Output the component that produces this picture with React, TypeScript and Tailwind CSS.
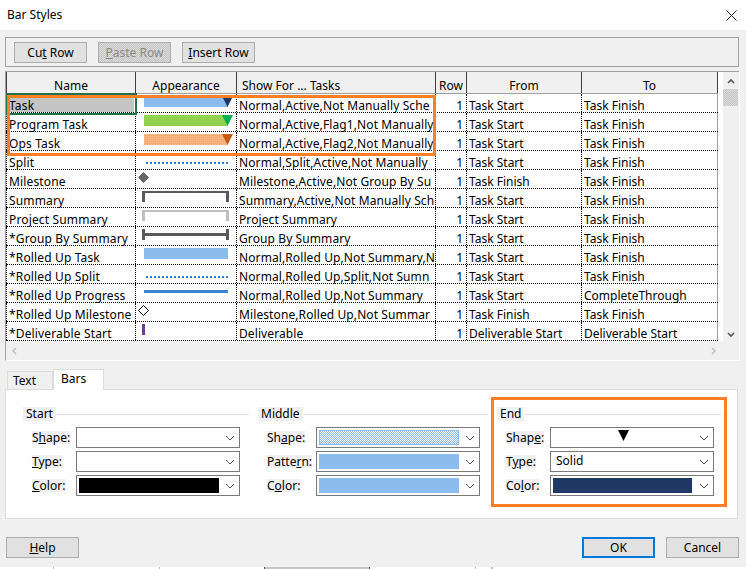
import type { ReactNode } from "react";

const font = "font-['Noto_Sans',sans-serif]";

const rows: [string, string, string, string, ReactNode][] = [
  ["Task", "Normal,Active,Not Manually Sche", "Task Start", "Task Finish", <TaskBar fill="#8cbbee" tip="#1f3864" />],
  ["Program Task", "Normal,Active,Flag1,Not Manually", "Task Start", "Task Finish", <TaskBar fill="#92d050" tip="#00b050" />],
  ["Ops Task", "Normal,Active,Flag2,Not Manually", "Task Start", "Task Finish", <TaskBar fill="url(#ops)" tip="#c55a11" />],
  ["Split", "Normal,Split,Active,Not Manually", "Task Start", "Task Finish", <DotLine />],
  ["Milestone", "Milestone,Active,Not Group By Su", "Task Finish", "Task Finish", <Diamond fill="#666666" stroke="#666666" />],
  ["Summary", "Summary,Active,Not Manually Sch", "Task Start", "Task Finish", <Bracket color="#595959" />],
  ["Project Summary", "Project Summary", "Task Start", "Task Finish", <Bracket color="#bfbfbf" />],
  ["*Group By Summary", "Group By Summary", "Task Start", "Task Finish", <GroupBar />],
  ["*Rolled Up Task", "Normal,Rolled Up,Not Summary,N", "Task Start", "Task Finish", <TaskBar fill="#8cbbee" />],
  ["*Rolled Up Split", "Normal,Rolled Up,Split,Not Sumn", "Task Start", "Task Finish", <DotLine />],
  ["*Rolled Up Progress", "Normal,Rolled Up,Not Summary", "Task Start", "CompleteThrough", <ProgressLine />],
  ["*Rolled Up Milestone", "Milestone,Rolled Up,Not Summar", "Task Finish", "Task Finish", <Diamond fill="#ffffff" stroke="#000000" />],
  ["*Deliverable Start", "Deliverable", "Deliverable Start", "Deliverable Start", <Tick />],
];

function Cell({ className, children }: { className: string; children: ReactNode }) {
  return <div className={`${className} shrink-0 whitespace-nowrap pl-[2px] pt-[6px] leading-[12px]`}>{children}</div>;
}

function Head({ className, children }: { className: string; children: ReactNode }) {
  return <div className={`${className} shrink-0 overflow-hidden whitespace-nowrap border-r border-[#404040] pt-[6px] leading-[16px]`}>{children}</div>;
}

function Art({ children }: { children: ReactNode }) {
  return (
    <svg width="100" height="18" viewBox="0 0 100 18" className="block" shapeRendering="crispEdges">
      <defs>
        <pattern id="ops" width="2" height="2" patternUnits="userSpaceOnUse">
          <rect width="2" height="2" fill="#f6ae74" />
          <rect width="1" height="1" fill="#f4bb90" />
        </pattern>
      </defs>
      {children}
    </svg>
  );
}

function TaskBar({ fill, tip }: { fill: string; tip?: string }) {
  return (
    <Art>
      <rect x="8" y="2" width="84" height="11" fill={fill} />
      {tip && <polygon points="86,2 97,2 91.5,13" fill={tip} shapeRendering="auto" />}
    </Art>
  );
}

function DotLine() {
  return (
    <Art>
      <line x1="10" y1="11.5" x2="92" y2="11.5" stroke="#2e86d6" strokeWidth="2" strokeDasharray="2 2" />
    </Art>
  );
}

function Diamond({ fill, stroke }: { fill: string; stroke: string }) {
  return (
    <Art>
      <polygon points="7.5,2.5 12.5,7.5 7.5,12.5 2.5,7.5" fill={fill} stroke={stroke} shapeRendering="auto" />
    </Art>
  );
}

function Bracket({ color }: { color: string }) {
  return (
    <Art>
      <rect x="6" y="2" width="87" height="2" fill={color} />
      <rect x="6" y="2" width="3" height="11" fill={color} />
      <rect x="90" y="2" width="3" height="11" fill={color} />
    </Art>
  );
}

function GroupBar() {
  return (
    <Art>
      <rect x="6" y="2" width="3" height="11" fill="#595959" />
      <rect x="90" y="2" width="3" height="11" fill="#595959" />
      <rect x="6" y="6" width="87" height="3" fill="#595959" />
    </Art>
  );
}

function ProgressLine() {
  return (
    <Art>
      <rect x="8" y="6" width="84" height="3" fill="#3d85d0" />
    </Art>
  );
}

function Tick() {
  return (
    <Art>
      <rect x="6" y="2" width="3" height="11" fill="#6f3d98" />
    </Art>
  );
}

function Chevron() {
  return (
    <svg width="10" height="6" viewBox="0 0 10 6" className="shrink-0">
      <path d="M1 1L5 5L9 1" fill="none" stroke="#555555" />
    </svg>
  );
}

function Btn({ children, className = "border border-[#adadad]" }: { children: ReactNode; className?: string }) {
  return (
    <div className={`flex h-[21px] w-[73px] items-center justify-center bg-[#e1e1e1] pt-px text-[12px] leading-[16px] ${className}`}>
      <span>{children}</span>
    </div>
  );
}

function Combo({ children }: { children?: ReactNode }) {
  return (
    <div className="flex h-[21px] w-[164px] items-center border border-[#7a7a7a] bg-white pr-[4px] text-[12px]">
      <div className="flex h-full min-w-0 flex-1 items-stretch p-[2px]">{children}</div>
      <Chevron />
    </div>
  );
}

function Field({ label, labelW, children }: { label: ReactNode; labelW: string; children?: ReactNode }) {
  return (
    <div className="flex items-center">
      <div className={`${labelW} shrink-0 pl-[9px] text-[12px]`}>
        <span className="inline-block bg-[#f0f0f0] leading-[13px]">{label}</span>
      </div>
      <Combo>{children}</Combo>
    </div>
  );
}

function Group({ title, width, children }: { title: string; width: string; children: ReactNode }) {
  return (
    <div className={`${width} shrink-0`}>
      <div className="flex h-[14px] items-center text-[12px]">
        <span className="bg-[#f0f0f0] px-[3px] leading-[14px]">{title}</span>
        <span className="ml-px h-px flex-1 bg-[#dcdcdc]" />
      </div>
      <div className="mt-[6px] flex flex-col gap-[3px]">{children}</div>
    </div>
  );
}

function DitherSwatch() {
  return (
    <svg width="140" height="15" className="block" shapeRendering="crispEdges">
      <defs>
        <pattern id="dither" width="2" height="2" patternUnits="userSpaceOnUse">
          <rect width="2" height="2" fill="#ffffff" />
          <rect width="1" height="1" fill="#8cbbee" />
          <rect x="1" y="1" width="1" height="1" fill="#8cbbee" />
        </pattern>
      </defs>
      <rect width="140" height="15" fill="url(#dither)" />
      <rect x="0.5" y="0.5" width="139" height="14" fill="none" stroke="#8cbbee" />
    </svg>
  );
}

export default function App() {
  return (
    <div className={`${font} relative h-[569px] w-[748px] overflow-hidden bg-white text-[12px] text-black`}>
      {/* title bar */}
      <div className="flex h-[30px] items-center justify-between pl-[7px] pr-[11px]">
        <span>Bar Styles</span>
        <svg width="11" height="11" viewBox="0 0 11 11">
          <path d="M0.5 0.5L10.5 10.5M10.5 0.5L0.5 10.5" stroke="#222" fill="none" />
        </svg>
      </div>

      <div className="h-[537px] w-[746px] bg-[#f0f0f0] pl-[5px] pt-[7px]">
        {/* toolbar */}
        <div className="flex h-[30px] w-[734px] items-start gap-[11px] border border-[#a0a0a0] pl-[8px] pt-[4px]">
          <Btn>Cu<u>t</u> Row</Btn>
          <Btn className="border border-[#adadad] bg-[repeating-conic-gradient(#c4c4c4_0_25%,#dcdcdc_0_50%)] bg-[length:2px_2px] text-[#8a8a8a]"><u>P</u>aste Row</Btn>
          <Btn><u>I</u>nsert Row</Btn>
        </div>

        {/* table */}
        <div className="mt-[4px] h-[290px] w-[735px] border-b border-l border-r border-b-white border-l-[#a0a0a0] border-r-white">
          <div className="flex h-[270px]">
            <div className="w-[712px] shrink-0">
              <div className="flex h-[23px] border-b border-t border-b-[#a0a0a0] border-t-[#a0a0a0]">
                <Head className="w-[130px] border-l text-center">Name</Head>
                <Head className="w-[101px] text-center">Appearance</Head>
                <Head className="w-[199px] pl-[5px]">Show For ... Tasks</Head>
                <Head className="w-[31px] text-center">Row</Head>
                <Head className="w-[115px] text-center">From</Head>
                <Head className="w-[136px] text-center">To</Head>
              </div>
              <div className="bg-white">
                {rows.map(([name, show, from, to, art], i) => (
                  <div key={name} className="flex h-[19px] border-b border-dotted border-black">
                    <div className={`w-[130px] shrink-0 whitespace-nowrap border-l border-r border-dotted border-black pl-[2px] leading-[12px] tracking-[0.15px] ${i === 0 ? "pt-[3px]" : "pt-[6px]"}`}>
                      <span className={i === 0 ? "mr-px block h-[15px] bg-[#c4c4c4] pt-[3px]" : ""}>{name}</span>
                    </div>
                    <div className="w-[101px] shrink-0 border-r border-dotted border-black">{art}</div>
                    <Cell className="w-[199px] border-r border-dotted border-black tracking-[0.1px]">{show}</Cell>
                    <div className="w-[31px] shrink-0 border-r border-dotted border-black pr-[3px] pt-[6px] text-right leading-[12px]">1</div>
                    <Cell className="w-[115px] border-r border-dotted border-black">{from}</Cell>
                    <Cell className="w-[136px] border-r border-[#a0a0a0]">{to}</Cell>
                  </div>
                ))}
              </div>
            </div>
            {/* vertical scrollbar */}
            <div className="flex w-[21px] border-t border-[#a0a0a0]">
              <div className="h-[269px] w-[5px] bg-white" />
              <div className="flex w-[15px] flex-col items-center pt-[6px]">
                <svg width="8" height="6" viewBox="0 0 8 6"><path d="M1 5L4 2L7 5" fill="none" stroke="#555" strokeWidth="1.6" /></svg>
                <div className="mt-[5px] h-[17px] w-[15px] shrink-0 bg-[repeating-conic-gradient(#c4c4c4_0_25%,#dcdcdc_0_50%)] bg-[length:2px_2px]" />
                <svg className="mb-[3px] mt-auto" width="8" height="6" viewBox="0 0 8 6"><path d="M1 1L4 4L7 1" fill="none" stroke="#555" strokeWidth="1.6" /></svg>
              </div>
            </div>
          </div>
          {/* horizontal scrollbar */}
          <div className="flex h-[19px] items-center justify-between pl-[5px] pr-[22px]">
            <svg width="6" height="8" viewBox="0 0 6 8"><path d="M5 1L2 4L5 7" fill="none" stroke="#c0c0c0" strokeWidth="1.6" /></svg>
            <svg width="6" height="8" viewBox="0 0 6 8"><path d="M1 1L4 4L1 7" fill="none" stroke="#c0c0c0" strokeWidth="1.6" /></svg>
          </div>
        </div>

        {/* tabs */}
        <div className="ml-[2px] mt-[8px] flex h-[20px] items-end">
          <div className="h-[18px] w-[46px] border border-b-0 border-[#dcdcdc] pl-[5px] pt-px leading-[16px]">Text</div>
          <div className="relative z-10 -mb-px h-[21px] w-[51px] border border-b-0 border-[#dcdcdc] bg-white pl-[7px] pt-px leading-[16px]">Bars</div>
        </div>

        {/* panel */}
        <div className="flex h-[130px] w-[733px] gap-[9px] border border-[#dcdcdc] bg-white pl-[17px] pt-[17px]">
          <Group title="Start" width="w-[226px]">
            <Field labelW="w-[53px]" label={<>S<u>h</u>ape:</>} />
            <Field labelW="w-[53px]" label={<><u>T</u>ype:</>} />
            <Field labelW="w-[53px]" label={<><u>C</u>olor:</>}>
              <div className="w-[140px] bg-black" />
            </Field>
          </Group>
          <Group title="Middle" width="w-[230px]">
            <Field labelW="w-[58px]" label={<>Sh<u>a</u>pe:</>}>
              <DitherSwatch />
            </Field>
            <Field labelW="w-[58px]" label={<>Patte<u>r</u>n:</>}>
              <div className="w-[140px] bg-[#8cbbee]" />
            </Field>
            <Field labelW="w-[58px]" label={<>C<u>o</u>lor:</>}>
              <div className="w-[140px] bg-[#8cbbee]" />
            </Field>
          </Group>
          <Group title="End" width="w-[224px]">
            <Field labelW="w-[53px]" label={<>Shap<u>e</u>:</>}>
              <div className="flex w-[140px] justify-center">
                <svg width="11" height="11" viewBox="0 0 11 11"><polygon points="0,0 11,0 5.5,11" fill="#000" /></svg>
              </div>
            </Field>
            <Field labelW="w-[53px]" label={<>T<u>y</u>pe:</>}>
              <div className="pl-[3px] leading-[14px]">Solid</div>
            </Field>
            <Field labelW="w-[53px]" label={<>Co<u>l</u>or:</>}>
              <div className="w-[139px] bg-[#1f3864]" />
            </Field>
          </Group>
        </div>

        {/* footer */}
        <div className="mt-[18px] flex h-[21px] w-[734px] items-center justify-between pl-[1px]">
          <Btn><u>H</u>elp</Btn>
          <div className="flex gap-[11px]">
            <Btn className="border-2 border-[#0078d7]">OK</Btn>
            <Btn>Cancel</Btn>
          </div>
        </div>
      </div>

      {/* bits of the window underneath, showing below the dialog */}
      <div className="flex h-[2px] items-stretch">
        <div className="ml-[53px] w-px bg-[#c0c0c0]" />
        <div className="ml-[105px] w-px bg-[#c0c0c0]" />
        <div className="ml-[104px] w-px bg-[#217346]" />
        <div className="w-[104px] bg-[#c4c4c4]" />
        <div className="w-px bg-[#217346]" />
        <div className="ml-[105px] w-px bg-[#c0c0c0]" />
        <div className="ml-[15px] w-[2px] bg-[#c0c0c0]" />
      </div>

      {/* annotations drawn over the dialog */}
      <div className="absolute left-[6px] top-[93px] h-[22px] w-[131px] border-2 border-[#217346]" />
      <div className="absolute left-[7px] top-[95px] h-[61px] w-[429px] border-[3px] border-[#ff7f27]" />
      <div className="absolute left-[491px] top-[397px] h-[110px] w-[236px] border-[3px] border-[#ff7f27]" />
    </div>
  );
}
